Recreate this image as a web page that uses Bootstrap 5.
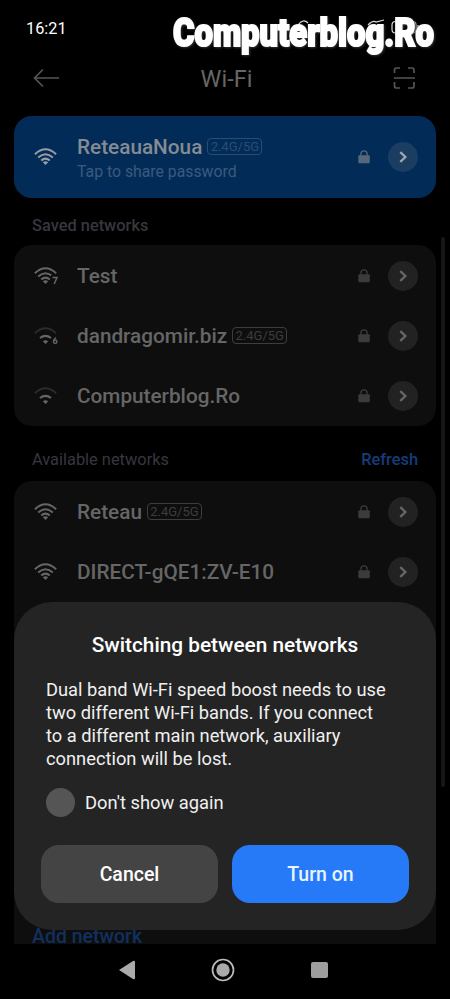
<!DOCTYPE html>
<html lang="en">
<head>
<meta charset="utf-8">
<meta name="viewport" content="width=device-width, initial-scale=1">
<title>Wi-Fi</title>
<link href="https://cdn.jsdelivr.net/npm/bootstrap@5.3.0/dist/css/bootstrap.min.css" rel="stylesheet">
<style>
html,body{background:#000}
body{font-family:Roboto,"Liberation Sans",sans-serif;color:#666;line-height:1.2;-webkit-font-smoothing:antialiased}
svg{display:block;flex:none}
.phone{width:450px;height:999px;background:#000}
.status{height:56px;padding:1px 0 0 26px;color:#fff;font-size:16.3px}
.brand{right:0;top:0}
.topbar{height:60px;padding:0 34px 16px 33px}
.page-title{font-size:23.5px;color:#666;font-weight:400;padding-top:3px}
.scroller{height:828px;padding:0 14px}
.current{height:82px;border-radius:18px;background:#022c57;color:#858b93}
.panel{border-radius:18px;background:#0e0e0e}
.net{height:60.3px;padding-top:1px!important}
.net,.current{padding:0 18px 0 20px}
.net-icon{width:43px}
.net-name{font-size:20.75px;font-weight:500;line-height:25px;padding-top:1px}
.current .net-name{padding-top:2px}
.net-sub{font-size:15.8px;line-height:20px;padding-top:2px;color:#3c5a7d}
.band{font-size:13px;line-height:15px;border:1px solid #3d3d3d;border-radius:4px;width:55px;height:17px;color:#3d3d3d;margin-left:5px;text-align:center}
.current .band{border-color:#2a4c73;color:#2a4c73}
.go{width:30px;height:30px;background:#222;color:#686868;margin-left:18px}
.current .go{background:#1b3d62;color:#a0a7ae}
.padlock{color:#3b3b3b}
.current .padlock{color:#56677b}
.section{padding:0 18px;font-size:16.4px;color:#37373f}
.s1{height:47px;padding-top:18px;font-weight:500}
.s2{height:55px;padding-top:12px}
.accent{color:#163c7a;font-weight:500}
.rest{height:464px;border-radius:18px 18px 0 0}
.add{font-size:19.5px;line-height:24px;height:20px;padding-left:18px;color:#11305f;font-weight:500}
.thumb{right:5px;top:237px;width:4px;height:550px;border-radius:2px;background:#161616}
.sheet{left:14px;top:602px;width:422px;height:328px;border-radius:38px;background:#242424;color:#f0f0f0;padding:29px 27px 27px}
.sheet-title{font-size:20.8px;line-height:28px;font-weight:500;color:#fff}
.sheet-text{font-size:18.3px;line-height:23px;margin:19px 0 0 5px}
.check{width:29px;height:29px;background:#555}
.opt{font-size:18.35px;margin:18px 0 0 5px;gap:10px}
.sheet-actions{gap:14px;margin-top:28px}
.sheet-actions .btn{height:58px;border-radius:18px;font-size:19.5px;font-weight:500;border:0;padding-top:8px}
.no{background:#444!important;color:#fff!important}
.yes{background:#277af7!important;color:#e8f4ff!important}
.keys{height:55px;padding-right:4px}
</style>
</head>
<body>
<svg width="0" height="0" class="position-absolute" aria-hidden="true">
<defs>
<g id="arcs" fill="none" stroke="currentColor" stroke-width="2">
<path d="M.9 6.200Q11.500-3.700 22.100 6.200"/><path d="M4.200 9.500Q11.500 2.900 18.800 9.500"/><path d="M7.200 12.500Q11.500 8.800 15.800 12.500"/></g>
<path id="dot" d="M8.800 14.200Q11.500 12.100 14.200 14.200L11.500 17Z" fill="currentColor"/>
<g id="lock"><path d="M2.900 6V4a3.100 3.100 0 0 1 6.200 0V6" fill="none" stroke="currentColor" stroke-width="1.300"/><rect x=".3" y="5.200" width="11.500" height="8" rx="1" fill="currentColor"/></g>
<path id="chev" d="M1.300 1.200 6.400 6 1.300 10.800" fill="none" stroke="currentColor" stroke-width="2.300"/>
</defs>
</svg>
<div class="phone position-relative overflow-hidden">
<div class="status d-flex align-items-center">16:21</div>
<svg class="brand position-absolute" width="285" height="64" viewBox="165 0 285 64">
<g fill="none" stroke="#ddd" stroke-width="1.200"><path d="M298 25q5-7 10-2M277 28l5-3M368 25q5-5 8-3l8-2"/><rect x="392" y="21.500" width="24" height="11.500" rx="3.500"/><path d="M418 25v5"/></g>
<text x="173" y="46" font-family="Roboto" font-weight="900" font-size="39.500" textLength="261" lengthAdjust="spacingAndGlyphs" fill="#fff" stroke="#fff" stroke-width="2.100" style="filter:drop-shadow(1px 1px 1px #333)">Computerblog.Ro</text>
</svg>
<header class="topbar d-flex align-items-center justify-content-between">
<svg width="27" height="20" fill="none" stroke="#555" stroke-width="1.700"><path d="M10 1.500 1.500 10 10 18.500M1.500 10H26"/></svg>
<div class="page-title">Wi-Fi</div>
<svg width="23" height="24" fill="none" stroke="#555" stroke-width="1.700" viewBox="0 0 23 24"><path d="M1.500 7V4q0-2 2-2H7M15 2h4q2 0 2 2v3M21 16v4q0 2-2 2h-4M7 22H3.500q-2 0-2-2v-4M1 12h21"/></svg>
</header>
<main class="scroller overflow-hidden">
<div class="current d-flex align-items-center">
<div class="net-icon"><svg width="25" height="18" color="#989da3"><use href="#arcs"/><use href="#dot"/></svg></div>
<div class="flex-grow-1"><div class="d-flex align-items-center"><span class="net-name">ReteauaNoua</span><span class="band">2.4G/5G</span></div><div class="net-sub">Tap to share password</div></div>
<svg class="padlock" width="12" height="14"><use href="#lock"/></svg><div class="go rounded-circle d-flex align-items-center justify-content-center"><svg width="8" height="12"><use href="#chev"/></svg></div>
</div>
<div class="section s1 d-flex"><span>Saved networks</span></div>
<div class="panel">
<div class="net d-flex align-items-center"><div class="net-icon"><svg width="25" height="18"><use href="#arcs"/><use href="#dot"/><path d="M17 8h8v10h-8z" fill="#0e0e0e"/><path d="M18.500 10.500h4.500l-2.800 6.500" fill="none" stroke="currentColor" stroke-width="1.500"/></svg></div><span class="net-name">Test</span>
<svg class="padlock ms-auto" width="12" height="14"><use href="#lock"/></svg><div class="go rounded-circle d-flex align-items-center justify-content-center"><svg width="8" height="12"><use href="#chev"/></svg></div></div>
<div class="net d-flex align-items-center"><div class="net-icon"><svg width="25" height="18"><path d="M.9 6.200Q11.500-3.700 22.100 6.200" fill="none" stroke="#2b2b2b" stroke-width="2"/><path d="M6 11Q11.500 6.800 17 11" fill="none" stroke="currentColor" stroke-width="2.200"/><use href="#dot"/><path d="M22 10.500q-2.500 1.500-2.500 4" fill="none" stroke="currentColor" stroke-width="1.400"/><circle cx="21.200" cy="14.700" r="1.700" fill="none" stroke="currentColor" stroke-width="1.400"/></svg></div><span class="net-name">dandragomir.biz</span><span class="band">2.4G/5G</span>
<svg class="padlock ms-auto" width="12" height="14"><use href="#lock"/></svg><div class="go rounded-circle d-flex align-items-center justify-content-center"><svg width="8" height="12"><use href="#chev"/></svg></div></div>
<div class="net d-flex align-items-center"><div class="net-icon"><svg width="25" height="18"><path d="M.9 6.200Q11.500-3.700 22.100 6.200" fill="none" stroke="#2b2b2b" stroke-width="2"/><path d="M6 11Q11.500 6.800 17 11" fill="none" stroke="currentColor" stroke-width="2.200"/><use href="#dot"/></svg></div><span class="net-name">Computerblog.Ro</span>
<svg class="padlock ms-auto" width="12" height="14"><use href="#lock"/></svg><div class="go rounded-circle d-flex align-items-center justify-content-center"><svg width="8" height="12"><use href="#chev"/></svg></div></div>
</div>
<div class="section s2 d-flex justify-content-between align-items-center"><span>Available networks</span><span class="accent">Refresh</span></div>
<div class="panel rest d-flex flex-column">
<div class="net d-flex align-items-center"><div class="net-icon"><svg width="25" height="18"><use href="#arcs"/><use href="#dot"/></svg></div><span class="net-name">Reteau</span><span class="band">2.4G/5G</span>
<svg class="padlock ms-auto" width="12" height="14"><use href="#lock"/></svg><div class="go rounded-circle d-flex align-items-center justify-content-center"><svg width="8" height="12"><use href="#chev"/></svg></div></div>
<div class="net d-flex align-items-center"><div class="net-icon"><svg width="25" height="18"><use href="#arcs"/><use href="#dot"/></svg></div><span class="net-name">DIRECT-gQE1:ZV-E10</span>
<svg class="padlock ms-auto" width="12" height="14"><use href="#lock"/></svg><div class="go rounded-circle d-flex align-items-center justify-content-center"><svg width="8" height="12"><use href="#chev"/></svg></div></div>
<div class="add mt-auto">Add network</div>
</div>
</main>
<nav class="keys d-flex align-items-center justify-content-center">
<svg width="210" height="28" viewBox="0 0 210 28"><path d="M1 12 15 3Q17 2 17 4V20Q17 22 15 21Z" fill="#aaa"/><circle cx="105" cy="12" r="10.500" fill="none" stroke="#bbb" stroke-width="1.700"/><circle cx="105" cy="12" r="6.700" fill="#aaa"/><rect x="193" y="4" width="17" height="16" rx="2" fill="#9e9e9e"/></svg>
</nav>
<div class="thumb position-absolute"></div>
<section class="sheet position-absolute">
<div class="sheet-title text-center">Switching between networks</div>
<div class="sheet-text">Dual band Wi-Fi speed boost needs to use<br>two different Wi-Fi bands. If you connect<br>to a different main network, auxiliary<br>connection will be lost.</div>
<div class="opt d-flex align-items-center"><span class="check rounded-circle"></span><span>Don't show again</span></div>
<div class="sheet-actions d-flex"><button class="btn no flex-fill w-50">Cancel</button><button class="btn yes flex-fill w-50">Turn on</button></div>
</section>
</div>
<script src="https://cdn.jsdelivr.net/npm/bootstrap@5.3.0/dist/js/bootstrap.bundle.min.js"></script>
</body>
</html>
